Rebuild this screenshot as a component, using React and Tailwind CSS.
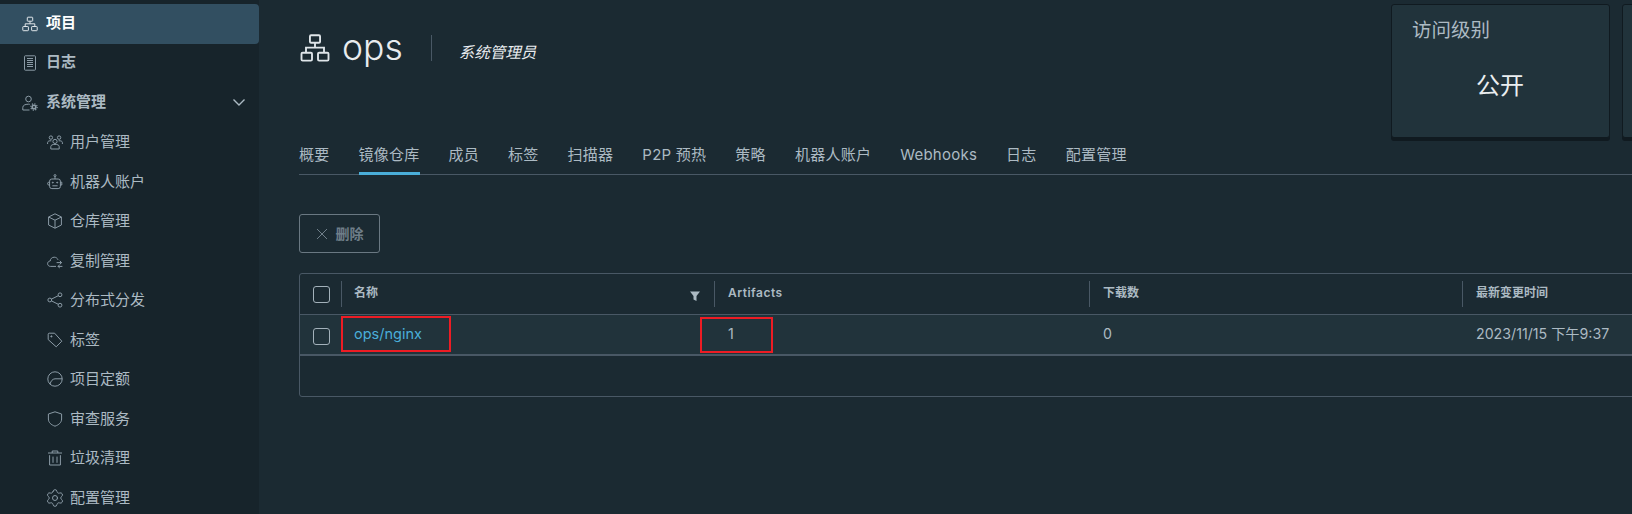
import React from "react";
import { Settings } from "lucide-react";

const Ico = ({ children, className = "w-4 h-4" }) => (
  <svg viewBox="0 0 16 16" fill="none" stroke="currentColor" strokeWidth="1" className={`${className} shrink-0`}>
    {children}
  </svg>
);

const ProjectIcon = ({ className }) => (
  <Ico className={className}>
    <rect x="5.3" y="1.2" width="5.4" height="4" rx="0.6" />
    <path d="M8 5.2V7.8M3.2 10.5V7.8H12.8V10.5" />
    <rect x="0.8" y="10.5" width="5.6" height="4.2" rx="0.6" />
    <rect x="9.6" y="10.5" width="5.6" height="4.2" rx="0.6" />
  </Ico>
);

const LogIcon = () => (
  <Ico>
    <rect x="2.5" y="0.8" width="11" height="14.4" rx="0.8" />
    <path d="M5 3.5H11M5 5.5H11M5 7.5H11M5 9.5H11M5 11.5H11" />
  </Ico>
);

const AdminIcon = () => (
  <Ico>
    <circle cx="6.5" cy="4" r="2.8" />
    <path d="M0.8 15V12.4C0.8 10.4 3 9.2 6.5 9.2C7 9.2 7.4 9.2 7.8 9.3M0.8 15H7.5" />
    <circle cx="12" cy="12" r="1.8" strokeWidth="1.6" />
    <circle cx="12" cy="12" r="3.2" strokeWidth="1.2" strokeDasharray="1.2 1.3" />
  </Ico>
);

const UsersIcon = () => (
  <Ico>
    <circle cx="8" cy="7.4" r="2.1" />
    <path d="M3.8 15V12.6C3.8 11 5.6 10.4 8 10.4C10.4 10.4 12.2 11 12.2 12.6V15Z" />
    <circle cx="3.9" cy="3.6" r="1.7" />
    <circle cx="12.1" cy="3.6" r="1.7" />
    <path d="M0.6 10V8.6C0.6 7.2 2.2 6.6 4.4 6.8M15.4 10V8.6C15.4 7.2 13.8 6.6 11.6 6.8" />
  </Ico>
);

const BotIcon = () => (
  <Ico>
    <circle cx="8" cy="1.6" r="1" />
    <path d="M8 2.6V5" />
    <rect x="2.6" y="5" width="10.8" height="9.6" rx="2.2" />
    <path d="M2.6 8.2H1.8C1 8.2 0.6 8.8 0.6 9.6C0.6 10.4 1 11 1.8 11H2.6M13.4 8.2H14.8V11H13.4" />
    <circle cx="5.8" cy="8.6" r="0.5" fill="currentColor" />
    <circle cx="10.2" cy="8.6" r="0.5" fill="currentColor" />
    <path d="M5.4 11.8H10.6" />
  </Ico>
);

const BoxIcon = () => (
  <Ico>
    <path d="M8 0.8L14.4 4V12L8 15.2L1.6 12V4Z" />
    <path d="M1.6 4L8 7.2L14.4 4M8 7.2V15.2" />
  </Ico>
);

const CloudIcon = () => (
  <Ico>
    <path d="M9 13.4H3.6C1.8 13.4 0.6 12.2 0.6 10.7C0.6 9.2 1.7 8.1 3.2 8C3.4 5.8 5 4.2 7.2 4.2C9 4.2 10.4 5.2 11 6.8" />
    <path d="M15.4 13.4H10.8M12.8 11.6L11 13.4L12.8 15" />
    <path d="M9.6 9.6H14.6M12.8 7.8L14.6 9.6L12.8 11.2" />
  </Ico>
);

const ShareIcon = () => (
  <Ico>
    <circle cx="2.8" cy="8" r="1.9" />
    <circle cx="13" cy="2.8" r="1.9" />
    <circle cx="13" cy="13.2" r="1.9" />
    <path d="M4.5 7.1L11.3 3.7M4.5 8.9L11.3 12.3" />
  </Ico>
);

const TagIcon = () => (
  <Ico>
    <path d="M1.2 2.2C1.2 1.6 1.6 1.2 2.2 1.2H7.6L14.8 9.2L9.2 14.8L1.2 7.6Z" />
    <circle cx="4.4" cy="4.4" r="0.6" fill="currentColor" />
  </Ico>
);

const QuotaIcon = () => (
  <Ico>
    <circle cx="8" cy="8" r="7.2" />
    <path d="M3 13.2C3.8 10 5.5 8 8 7.8H15.2" />
  </Ico>
);

const ShieldIcon = () => (
  <Ico>
    <path d="M8 0.8L14.6 3V8C14.6 11.4 12 13.8 8 15.2C4 13.8 1.4 11.4 1.4 8V3Z" />
  </Ico>
);

const TrashIcon = () => (
  <Ico>
    <path d="M1 3H15M5.2 3V1H10.8V3" />
    <path d="M2.6 5.2V15H13.4V5.2" />
    <path d="M6 6.6V12.8M10 6.6V12.8" />
  </Ico>
);

const GearIcon = () => <Settings size={20} strokeWidth={1.2} className="shrink-0 -mx-[2px]" />;

const subMenu = [
  ["用户管理", UsersIcon],
  ["机器人账户", BotIcon],
  ["仓库管理", BoxIcon],
  ["复制管理", CloudIcon],
  ["分布式分发", ShareIcon],
  ["标签", TagIcon],
  ["项目定额", QuotaIcon],
  ["审查服务", ShieldIcon],
  ["垃圾清理", TrashIcon],
  ["配置管理", GearIcon],
];

const tabs = ["概要", "镜像仓库", "成员", "标签", "扫描器", "P2P 预热", "策略", "机器人账户", "Webhooks", "日志", "配置管理"];

const Checkbox = () => <div className="w-[17px] h-[17px] rounded-[3px] border border-[#a3b1ba]" />;

const HeadCell = ({ children, className = "pl-[14px]" }) => (
  <div className={`relative flex items-center h-full text-[12px] font-semibold text-[#acbac3] ${className}`}>
    <span className="absolute left-0 top-[7px] bottom-[7px] w-px bg-[#495865]" />
    {children}
  </div>
);

function Sidebar() {
  return (
    <aside className="w-[259px] shrink-0 h-full bg-[#17242b] pt-[4px] text-[#acbac3] overflow-hidden">
      <div className="flex items-center h-[39.5px] pl-[22px] gap-[8px] bg-[#324f61] rounded-r-[4px] text-white font-semibold text-[15px]">
        <ProjectIcon className="w-4 h-4 text-[#dfe5e9]" />
        <span className="-mt-[2px]">项目</span>
      </div>
      <div className="flex items-center h-[39.5px] pl-[22px] gap-[8px] font-semibold text-[15px]">
        <span className="text-[#8b9ba6]"><LogIcon /></span>
        <span className="-mt-[2px]">日志</span>
      </div>
      <div className="flex items-center h-[39.5px] pl-[22px] gap-[8px] font-semibold text-[15px]">
        <span className="text-[#8b9ba6]"><AdminIcon /></span>
        <span className="-mt-[2px]">系统管理</span>
        <svg viewBox="0 0 12 7" fill="none" stroke="currentColor" strokeWidth="1.4" className="w-[12px] h-[7px] ml-auto mr-[14px]">
          <path d="M0.5 0.5L6 6L11.5 0.5" />
        </svg>
      </div>
      {subMenu.map(([label, Icon]) => (
        <div key={label} className="flex items-center h-[39.5px] pl-[47px] gap-[7px] text-[15px]">
          <span className="w-4 flex justify-center text-[#8b9ba6]"><Icon /></span>
          {label}
        </div>
      ))}
    </aside>
  );
}

export default function App() {
  return (
    <div className="flex w-[1632px] h-[514px] overflow-hidden bg-[#1b2a32] font-['Inter','Noto_Sans_CJK_SC',sans-serif]">
      <Sidebar />
      <main className="flex-1 min-w-0 pl-[40px] overflow-hidden">
        {/* header + cards */}
        <div className="flex h-[138px] w-[1400px]">
          <div className="w-[1092px] shrink-0 flex items-start pt-[33px] text-[#e8ecef]">
            <ProjectIcon className="w-[30px] h-[30px] ml-[1px] text-[#dfe5e9]" />
            <span className="ml-[12px] text-[35.5px] leading-[30px] font-light">ops</span>
            <span className="ml-[28px] mt-[2px] w-px h-[26px] bg-[#495865]" />
            <span className="ml-[27px] mt-[9px] text-[15.5px] leading-[22px] italic">系统管理员</span>
          </div>
          <div className="flex gap-[12px] pt-[4px] shrink-0">
            <div className="w-[219px] h-[134px] rounded-[3px] border border-[#101a20] shadow-[0_3px_0_#101a20] bg-[#21333b] pl-[20px] pt-[11px]">
              <div className="text-[19.5px] leading-[28px] text-[#acbac3]">访问级别</div>
              <div className="mt-[26px] ml-[64px] text-[24px] leading-[32px] text-[#eaeef0]">公开</div>
            </div>
            <div className="w-[219px] h-[134px] rounded-[3px] border border-[#101a20] shadow-[0_3px_0_#101a20] bg-[#21333b]" />
          </div>
        </div>

        {/* tabs */}
        <div className="flex gap-[29px] h-[37px] border-b border-[#495865]">
          {tabs.map((t) => (
            <div
              key={t}
              className={`h-[37px] pt-[6px] text-[15px] leading-[22px] tracking-[0.25px] whitespace-nowrap text-[#acbac3] border-b-[3px] ${t === "镜像仓库" ? "border-[#4aaed9]" : "border-transparent"}`}
            >
              {t}
            </div>
          ))}
        </div>

        {/* delete button */}
        <button className="flex items-center justify-center gap-[8px] w-[81px] h-[39px] mt-[39px] rounded-[3px] border border-[#6a7882] text-[14px] font-semibold text-[#6f7e89]">
          <svg viewBox="0 0 12 12" fill="none" stroke="currentColor" className="w-[12px] h-[12px]">
            <path d="M1 1L11 11M11 1L1 11" />
          </svg>
          删除
        </button>

        {/* table */}
        <div className="w-[1400px] h-[124px] mt-[20px] rounded-[3px] border border-[#495865]">
          <div className="grid grid-cols-[41px_373px_375px_373px_1fr] h-[40px] border-b border-[#495865] box-content">
            <div className="flex items-center pl-[13px]"><Checkbox /></div>
            <HeadCell className="pl-[13px]">
              <span className="-mt-[3px]">名称</span>
              <svg viewBox="0 0 10 10" fill="#acbac3" className="absolute right-[14px] top-[17px] w-[10px] h-[10px]">
                <path d="M0 0.5H10L6.5 5V10L3.5 8.5V5Z" />
              </svg>
            </HeadCell>
            <HeadCell><span className="-mt-[3px] tracking-[0.5px]">Artifacts</span></HeadCell>
            <HeadCell><span className="-mt-[3px]">下载数</span></HeadCell>
            <HeadCell><span className="-mt-[3px]">最新变更时间</span></HeadCell>
          </div>
          <div className="grid grid-cols-[41px_373px_375px_373px_1fr] h-[39px] border-b-2 border-[#495865] box-content bg-[#21333b] text-[14.2px] text-[#acbac3]">
            <div className="flex items-center pl-[13px] pt-[4px]"><Checkbox /></div>
            <div className="relative flex items-center pl-[13px] pb-[2px]">
              <span className="absolute left-0 top-[5px] bottom-[5px] w-px bg-[#495865]" />
              <span className="text-[14.5px] text-[#4aaed9]">ops/nginx</span>
              <span className="absolute left-0 top-px w-[110px] h-[36px] border-2 border-[#ed1c24]" />
            </div>
            <div className="relative flex items-center pl-[14px] pb-[2px]">
              1
              <span className="absolute -left-[14px] top-[2px] w-[73px] h-[36px] border-2 border-[#ed1c24]" />
            </div>
            <div className="flex items-center pl-[14px] pb-[2px]">0</div>
            <div className="flex items-center pl-[14px] pb-[2px]">2023/11/15 下午9:37</div>
          </div>
        </div>
      </main>
    </div>
  );
}
